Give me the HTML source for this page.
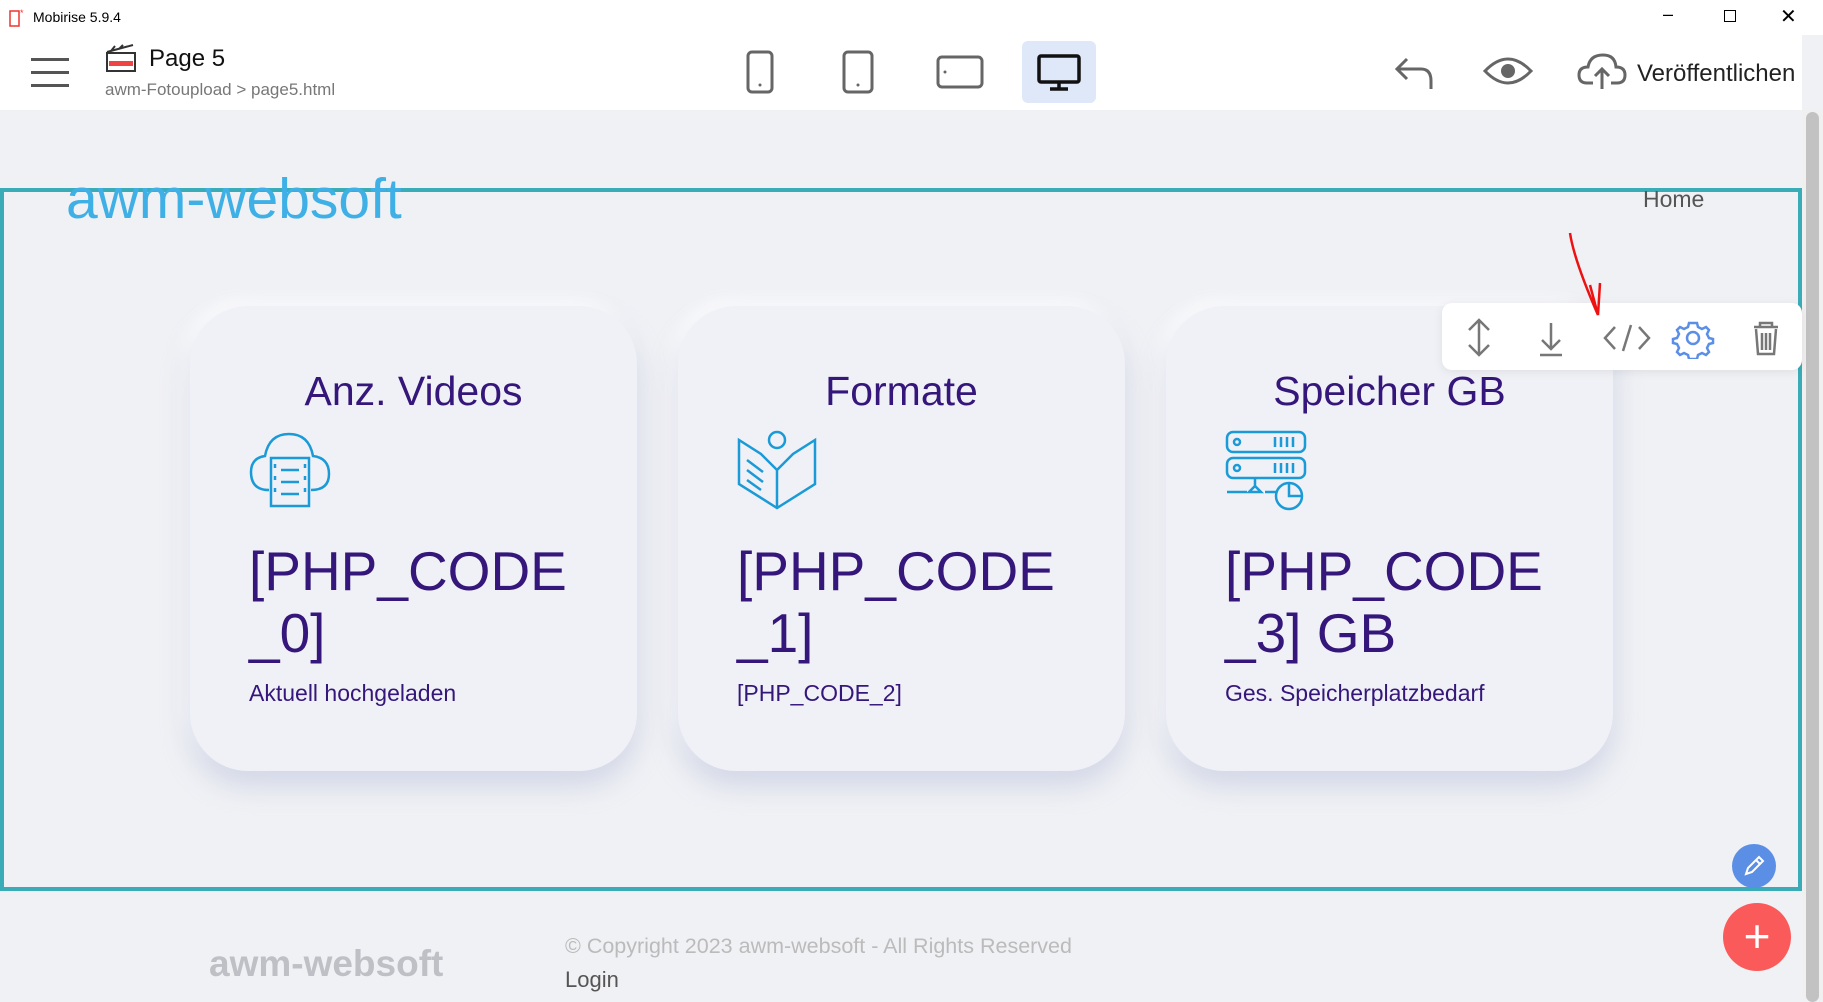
<!DOCTYPE html>
<html><head><meta charset="utf-8"><style>
*{margin:0;padding:0;box-sizing:border-box}
body{width:1823px;height:1000px;overflow:hidden;background:#f0f1f5;font-family:"Liberation Sans",sans-serif;position:relative}
.abs{position:absolute}
.title{top:0;left:0;width:1823px;height:35px;background:#fff;font-size:14px;color:#000}
.tb{top:35px;left:0;width:1802px;height:75px;background:#fff}
.card{position:absolute;top:306px;width:447px;height:465px;border-radius:58px;background:#f0f1f6;box-shadow:0 14px 28px rgba(170,180,210,.45),-6px -6px 16px rgba(255,255,255,.9)}
.card h2{position:absolute;top:368px;width:100%;text-align:center;font-weight:normal;font-size:41px;color:#35167a}
.ct{position:absolute;left:59px;top:234px;font-size:55px;line-height:62px;color:#35167a}
.cs{position:absolute;left:59px;top:374px;font-size:23px;color:#35167a}
.ic{position:absolute;left:59px;top:124px}
</style></head><body>
<div class="abs title"><svg class="abs" style="left:8px;top:7px" width="20" height="22"><rect x="2" y="4" width="9" height="15" fill="none" stroke="#e33" stroke-width="1.5"/><text x="12" y="9" font-size="9" fill="#e33">*</text></svg><span class="abs" style="left:33px;top:9px">Mobirise 5.9.4</span>
<span class="abs" style="left:1663px;top:4px;font-size:18px">–</span><span class="abs" style="left:1724px;top:10px;width:12px;height:12px;border:1.5px solid #000"></span><span class="abs" style="left:1780px;top:4px;font-size:20px">✕</span></div>
<div class="abs tb">
<div class="abs" style="left:31px;top:23px;width:38px;height:3px;background:#555;box-shadow:0 13px 0 #555,0 26px 0 #555"></div>
<svg class="abs" style="left:105px;top:8px" width="32" height="30"><rect x="2" y="10" width="28" height="18" fill="#fff" stroke="#333" stroke-width="2"/><rect x="4" y="18" width="24" height="5" fill="#e44"/><path d="M2 9 L28 2 M6 8 L10 3 M14 6 L18 2" stroke="#333" stroke-width="2"/></svg>
<span class="abs" style="left:149px;top:10px;font-size:24px;color:#111">Page 5</span>
<span class="abs" style="left:105px;top:45px;font-size:17px;color:#777">awm-Fotoupload &gt; page5.html</span>
<svg class="abs" style="left:745px;top:14px" width="30" height="46"><rect x="3" y="3" width="24" height="40" rx="4" fill="none" stroke="#666" stroke-width="3"/><circle cx="15" cy="36" r="1.5" fill="#666"/></svg>
<svg class="abs" style="left:841px;top:14px" width="34" height="46"><rect x="3" y="3" width="28" height="40" rx="4" fill="none" stroke="#666" stroke-width="3"/><circle cx="17" cy="36" r="1.5" fill="#666"/></svg>
<svg class="abs" style="left:935px;top:19px" width="50" height="36"><rect x="3" y="3" width="44" height="30" rx="4" fill="none" stroke="#666" stroke-width="3"/><circle cx="10" cy="18" r="1.5" fill="#666"/></svg>
<div class="abs" style="left:1022px;top:6px;width:74px;height:62px;background:#dfe8f8;border-radius:6px"></div>
<svg class="abs" style="left:1036px;top:18px" width="46" height="40"><rect x="3" y="3" width="40" height="26" rx="2" fill="none" stroke="#111" stroke-width="3.5"/><path d="M23 29 V35 M14 36 H32" stroke="#111" stroke-width="3.5"/></svg>
<svg class="abs" style="left:1393px;top:18px" width="44" height="40"><path d="M14 6 L4 16 L14 26 M4 16 H28 Q38 16 38 28 V36" fill="none" stroke="#666" stroke-width="3"/></svg>
<svg class="abs" style="left:1483px;top:20px" width="50" height="32"><path d="M2 16 Q25 -8 48 16 Q25 40 2 16Z" fill="none" stroke="#666" stroke-width="3"/><circle cx="25" cy="16" r="7" fill="#666"/></svg>
<svg class="abs" style="left:1577px;top:16px" width="50" height="40"><path d="M16 32 H10 Q2 32 2 24 Q2 16 11 16 Q13 4 26 4 Q38 4 39 16 Q48 16 48 24 Q48 32 40 32 H34" fill="none" stroke="#666" stroke-width="3"/><path d="M25 38 V18 M18 25 L25 18 L32 25" fill="none" stroke="#666" stroke-width="3"/></svg>
<span class="abs" style="left:1637px;top:25px;font-size:24px;color:#222">Veröffentlichen</span>
</div>
<div class="abs" style="left:1802px;top:110px;width:21px;height:890px;background:#f0f0f0"><div style="margin:2px 4px;width:13px;height:890px;background:#c2c2c2;border-radius:7px"></div></div>
<div class="abs" style="left:0;top:188px;width:1802px;height:703px;border:4px solid #3aacb8"></div>
<span class="abs" style="left:66px;top:166px;font-size:57px;color:#3fb0e6">awm-websoft</span>
<span class="abs" style="left:1643px;top:186px;font-size:23px;color:#555">Home</span>
<div class="card" style="left:190px"><h2 style="top:62px">Anz. Videos</h2>
<svg class="ic" width="82" height="80" fill="none" stroke="#1a9ad6" stroke-width="2.5"><path d="M20 60 Q2 60 2 42 Q2 28 16 26 Q20 4 40 4 Q60 4 64 26 Q80 28 80 44 Q80 60 62 60"/><rect x="22" y="28" width="38" height="48"/><path d="M32 40 H50 M32 52 H50 M32 64 H50 M26 34v4M26 46v4M26 58v4M56 34v4M56 46v4M56 58v4"/></svg>
<div class="ct">[PHP_CODE<br>_0]</div><div class="cs">Aktuell hochgeladen</div></div>
<div class="card" style="left:678px"><h2 style="top:62px">Formate</h2>
<svg class="ic" width="82" height="80" fill="none" stroke="#1a9ad6" stroke-width="2.5"><circle cx="40" cy="10" r="8"/><path d="M2 10 L2 54 L40 78 L78 54 L78 10 L56 24 L40 40 L24 24 Z M40 40 V78 M10 30 L26 42 M10 40 L26 52 M10 50 L24 60"/></svg>
<div class="ct">[PHP_CODE<br>_1]</div><div class="cs">[PHP_CODE_2]</div></div>
<div class="card" style="left:1166px"><h2 style="top:62px">Speicher GB</h2>
<svg class="ic" width="86" height="82" fill="none" stroke="#1a9ad6" stroke-width="2.5"><rect x="2" y="2" width="78" height="20" rx="6"/><rect x="2" y="28" width="78" height="20" rx="6"/><circle cx="12" cy="12" r="3"/><circle cx="12" cy="38" r="3"/><path d="M50 7v10M56 7v10M62 7v10M68 7v10M50 33v10M56 33v10M62 33v10M68 33v10M30 48v10M2 62h20M40 62h12M24 62 L30 56 L36 62Z"/><circle cx="64" cy="66" r="13"/><path d="M64 53v13h13"/></svg>
<div class="ct">[PHP_CODE<br>_3] GB</div><div class="cs">Ges. Speicherplatzbedarf</div></div>
<div class="abs" style="left:1442px;top:303px;width:360px;height:67px;background:#fff;border-radius:10px;box-shadow:0 2px 10px rgba(0,0,0,.08)"></div>
<svg class="abs" style="left:1462px;top:317px" width="340" height="42" fill="none" stroke="#777" stroke-width="2.5"><path d="M17 3 V38 M7 13 L17 3 L27 13 M7 28 L17 38 L27 28"/><path d="M89 6 V32 M80 23 L89 32 L98 23 M78 38 H100" /><path d="M153 10 L143 21 L153 32 M169 8 L161 34 M177 10 L187 21 L177 32"/><g stroke="#5b8ee6"><circle cx="231" cy="21" r="6"/><path d="M231 6 l4 0 1 4 4 2 4-2 3 3-2 4 2 4 4 1 0 4-4 1-2 4 2 4-3 3-4-2-4 2-1 4-8 0-1-4-4-2-4 2-3-3 2-4-2-4-4-1 0-4 4-1 2-4-2-4 3-3 4 2 4-2 1-4z"/></g><path d="M292 10 H316 M298 10 V6 H310 V10 M294 12 L296 37 H312 L314 12 M300 16 V33 M304 16 V33 M308 16 V33"/></svg>
<svg class="abs" style="left:1560px;top:230px" width="60" height="90" fill="none" stroke="#e11" stroke-width="2.5"><path d="M10 3 Q14 30 38 85 M30 55 L38 85 L40 53"/></svg>
<div class="abs" style="left:1732px;top:844px;width:44px;height:44px;border-radius:50%;background:#5b8fe6"></div>
<svg class="abs" style="left:1742px;top:854px" width="24" height="24" fill="none" stroke="#fff" stroke-width="2"><path d="M4 20 L6 14 L17 3 L21 7 L10 18 Z M14 6 L18 10"/></svg>
<span class="abs" style="left:209px;top:943px;font-size:37px;color:#bfc0c6;font-weight:bold">awm-websoft</span>
<span class="abs" style="left:565px;top:934px;font-size:21.5px;color:#bbb">© Copyright 2023 awm-websoft - All Rights Reserved</span>
<span class="abs" style="left:565px;top:967px;font-size:22px;color:#555">Login</span>
<div class="abs" style="left:1723px;top:903px;width:68px;height:68px;border-radius:50%;background:#fb5a5a;color:#fff;font-size:46px;line-height:66px;text-align:center">+</div>
</body></html>
